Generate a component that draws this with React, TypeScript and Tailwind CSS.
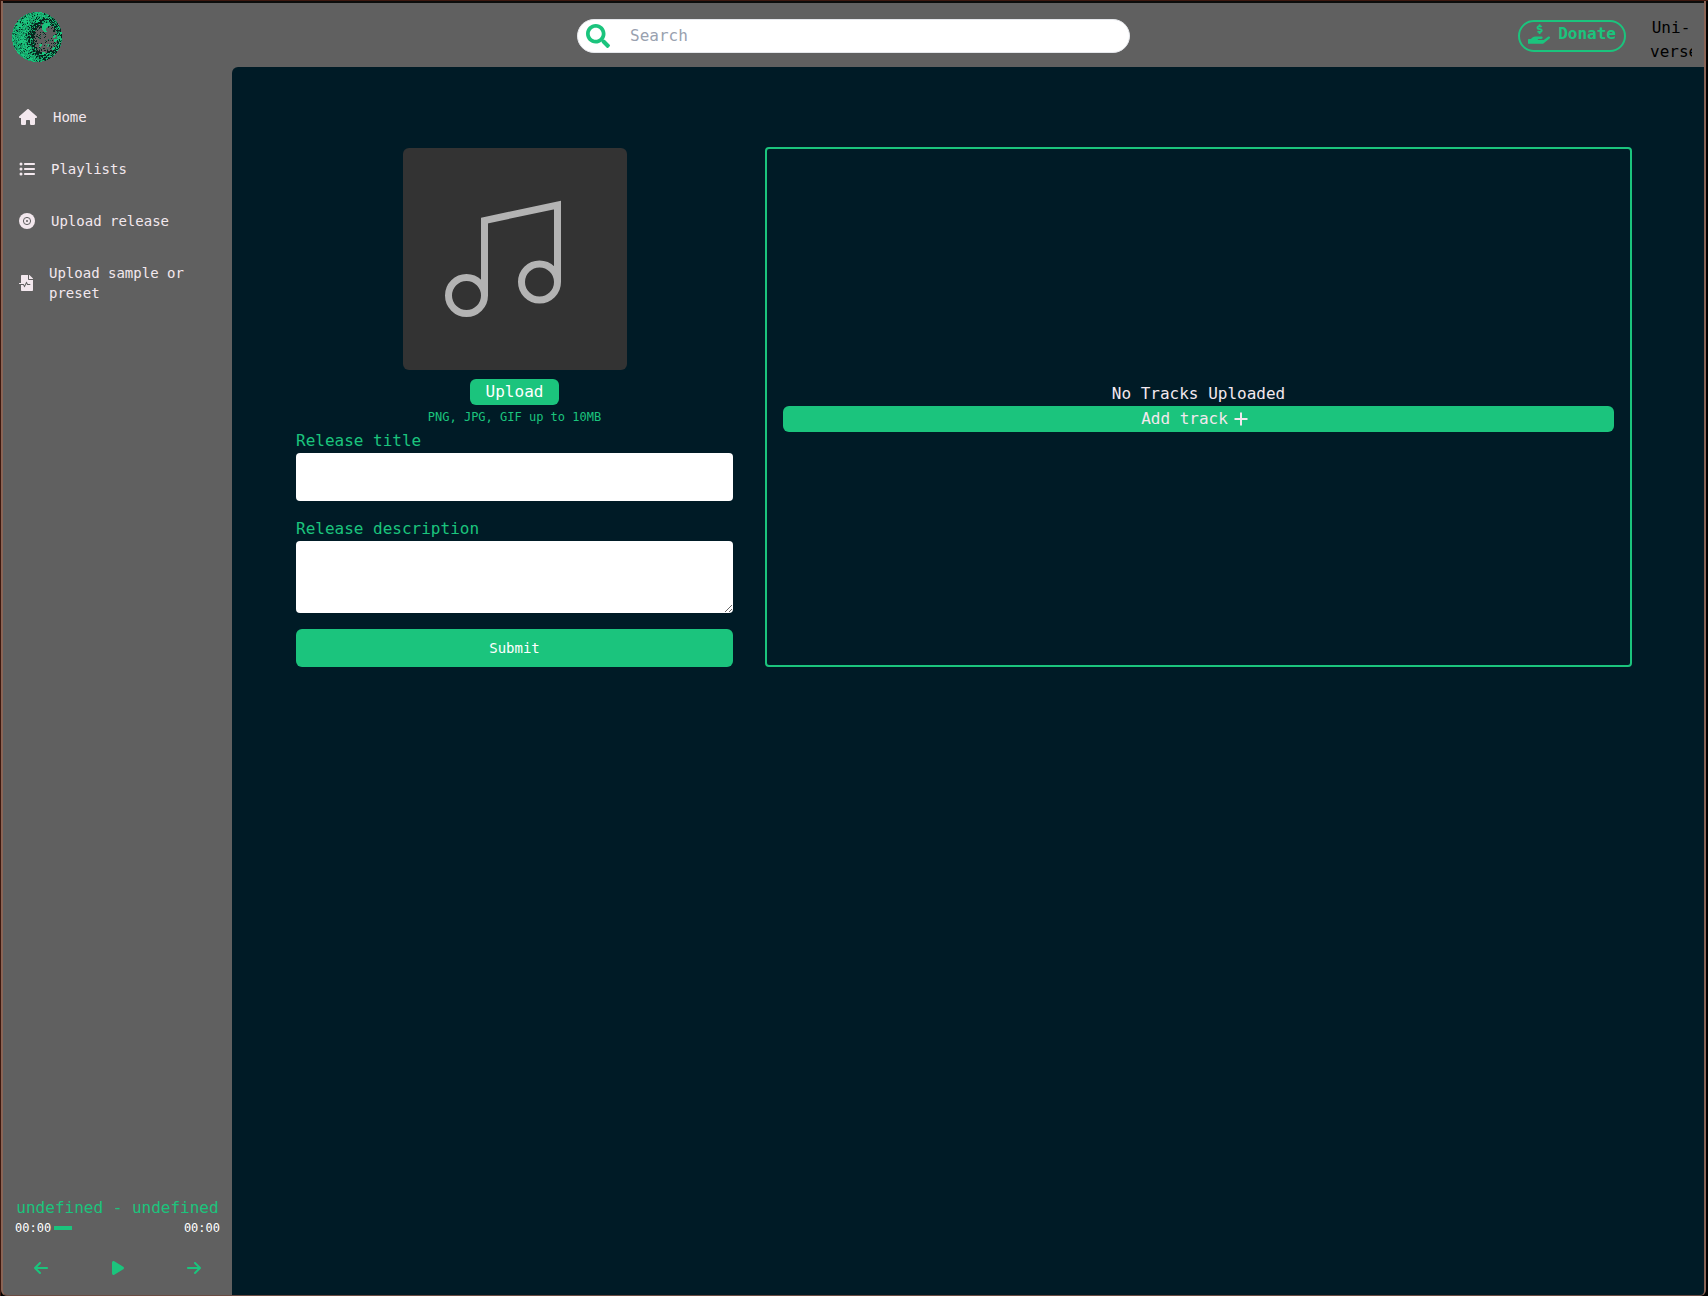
import { FaArrowLeft, FaArrowRight, FaHouse, FaListUl, FaPlay } from "react-icons/fa6";
import { FaFileMedicalAlt, FaHandHoldingUsd, FaSearch } from "react-icons/fa";

// Stippled moon: dots are scattered with a fixed pseudo-random sequence so it always looks the same.
function buildMoon() {
  let seed = 7;
  const rand = () => {
    seed = (seed * 16807) % 2147483647;
    return seed / 2147483647;
  };
  const layers = { light: "", mid: "", deep: "", dark: "" };
  const craters = [[7, 14, 3], [14, 8, 3], [10, 25, 2], [9, 29, 2], [25, 9, 2], [28, 33, 2], [35, 33, 2], [42, 24, 2], [43, 28, 2], [41, 36, 2], [31, 41, 2], [17, 36, 2]];
  for (let y = 0; y < 50; y++) {
    for (let x = 0; x < 50; x++) {
      const r = Math.hypot(x - 24.5, y - 24.5);
      const n = rand();
      const m = rand();
      if (r > 25) continue;
      const inner = Math.hypot((x - 33) / 12, (y - 26) / 15);
      const crescent = Math.hypot(x - 34, y - 15) < 5 && Math.hypot(x - 37, y - 17) > 3.4;
      const crater = craters.some(([a, b, c]) => Math.hypot(x - a, y - b) < c && Math.hypot(x - a - 1, y - b - 1) > c - 1.6);
      const dot = `M${x} ${y}h1v1h-1z`;
      if (crescent || (crater && n < 0.85)) layers.light += dot;
      else if (inner < 1) {
        if (n < (inner > 0.75 ? 0.4 : 0.08)) layers.dark += dot;
        else if (n > 0.96) layers.deep += dot;
      } else {
        const shade = x > 30 ? 0.4 : Math.max(0.05, 0.8 - (inner - 1) * 1.1);
        if (n < shade) layers.dark += dot;
        else if (n < shade + 0.15) layers.deep += dot;
        else if (m < 0.45) layers.light += dot;
        else layers.mid += dot;
      }
    }
  }
  return layers;
}

const moon = buildMoon();

function MoonLogo() {
  return (
    <svg viewBox="0 0 50 50" className="size-[50px]" shapeRendering="crispEdges" aria-hidden="true">
      <path d={moon.light} fill="#1bc47d" />
      <path d={moon.mid} fill="#17a168" />
      <path d={moon.deep} fill="#0f6546" />
      <path d={moon.dark} fill="#08261e" />
    </svg>
  );
}

function DiscIcon({ className }: { className?: string }) {
  return (
    <svg viewBox="0 0 16 16" className={className} aria-hidden="true">
      <circle cx="8" cy="8" r="8" fill="currentColor" />
      <circle cx="8" cy="8" r="3.6" fill="none" stroke="#606060" strokeWidth="1" />
      <circle cx="8" cy="8" r="1" fill="#606060" />
    </svg>
  );
}

const links = [
  { label: "Home", Icon: FaHouse, size: "h-4 w-[18px]" },
  { label: "Playlists", Icon: FaListUl, size: "size-4" },
  { label: "Upload release", Icon: DiscIcon, size: "size-4" },
  { label: "Upload sample or preset", Icon: FaFileMedicalAlt, size: "h-4 w-[14px]" },
];

function Header() {
  return (
    <header className="grid h-16 shrink-0 grid-cols-[1fr_minmax(0,553px)_1fr] items-center pt-0.5">
      <a href="#" aria-label="Universe home" className="ml-[9px] w-fit pt-0.5">
        <MoonLogo />
      </a>
      <label className="flex h-[34px] items-center rounded-full border border-gray-200 bg-white pl-2">
        <FaSearch className="size-6 shrink-0 text-[#1bc47d]" />
        <input type="search" aria-label="Search" placeholder="Search" className="ml-5 min-w-0 flex-1 bg-transparent pr-4 outline-none placeholder:text-gray-400" />
      </label>
      <div className="flex items-center justify-end gap-6 pr-3">
        <button className="flex h-8 items-center gap-2 rounded-full border-2 border-[#1bc47d] px-2 pb-1 font-bold text-[#1bc47d]">
          <FaHandHoldingUsd className="h-5 w-[22px]" />
          Donate
        </button>
        <button className="flex h-14 w-[42px] flex-col overflow-hidden pt-2 text-center text-black">
          <span className="block w-full">Uni-</span>
          <span>verse</span>
        </button>
      </div>
    </header>
  );
}

function Player() {
  return (
    <section aria-label="Player" className="px-3 pb-[19px]">
      <p className="text-center leading-6 text-[#1bc47d]">undefined - undefined</p>
      <div className="flex h-4 items-center text-xs text-white">
        <span>00:00</span>
        <span className="mx-[3px] flex flex-1">
          <span className="h-1 w-[18px] bg-[#1bc47d]" />
        </span>
        <span>00:00</span>
      </div>
      <div className="mt-6 flex justify-between px-[19px] text-[#1bc47d]">
        <button aria-label="Previous"><FaArrowLeft className="h-4 w-[14px]" /></button>
        <button aria-label="Play"><FaPlay className="h-4 w-3" /></button>
        <button aria-label="Next"><FaArrowRight className="h-4 w-[14px]" /></button>
      </div>
    </section>
  );
}

function Sidebar() {
  return (
    <aside className="flex w-[229px] shrink-0 flex-col justify-between">
      <nav className="flex flex-col gap-8 px-4 pt-10 text-sm leading-5">
        {links.map(({ label, Icon, size }) => (
          <a key={label} href="#" className="flex items-center gap-4">
            <Icon className={`${size} shrink-0`} />
            <span>{label}</span>
          </a>
        ))}
      </nav>
      <Player />
    </aside>
  );
}

function Cover() {
  return (
    <svg viewBox="0 0 224 222" className="h-[222px] w-[224px] rounded-md bg-[#333333]" role="img" aria-label="Cover art">
      <g fill="none" stroke="#b3b3b3" strokeWidth="7">
        <circle cx="63.500" cy="147.500" r="18" />
        <circle cx="136.500" cy="134" r="18" />
        <path d="M81.500 147.500V72.500L154.500 57V134" />
      </g>
    </svg>
  );
}

function ReleaseForm() {
  return (
    <form className="flex flex-col text-[#1bc47d]">
      <div className="flex flex-col items-center pt-px">
        <Cover />
        <button type="button" className="mt-[9px] h-[26px] rounded-md bg-[#1bc47d] px-4 text-white">Upload</button>
        <p className="mt-1 text-xs leading-4">PNG, JPG, GIF up to 10MB</p>
      </div>
      <label htmlFor="title" className="mt-1 leading-6">Release title</label>
      <input id="title" className="h-12 w-full rounded bg-white px-3 text-black" />
      <label htmlFor="description" className="mt-4 leading-6">Release description</label>
      <textarea id="description" className="h-[72px] w-full resize rounded bg-white p-3 text-black" />
      <button type="submit" className="mt-4 h-[38px] rounded-md bg-[#1bc47d] text-sm font-medium text-white">Submit</button>
    </form>
  );
}

function Tracks() {
  return (
    <section className="flex flex-col justify-center rounded border-2 border-[#1bc47d] px-4">
      <p className="text-center leading-6">No Tracks Uploaded</p>
      <button className="flex h-[26px] items-center justify-center gap-1.5 rounded-md bg-[#1bc47d] pr-2">
        Add track
        <svg viewBox="0 0 14 14" className="size-[14px]" fill="none" stroke="currentColor" strokeWidth="2" aria-hidden="true">
          <path d="M7 0.500V13.500M0.500 7H13.500" />
        </svg>
      </button>
    </section>
  );
}

export default function App() {
  return (
    <div className="flex min-h-screen border-l border-t border-[#3d180f] bg-black pr-0.5 font-['DejaVu_Sans_Mono',monospace] text-base text-[#f3e8ee]">
      <div className="flex min-w-0 flex-1 flex-col rounded-b-md border-x-2 border-b border-[#8a6455] border-b-[#6b4c42] bg-[#606060]">
        <div className="h-0.5 shrink-0 bg-[#0b0c0b]" />
        <Header />
        <div className="flex flex-1">
          <Sidebar />
          <main className="min-w-0 flex-1 rounded-tl-md rounded-br-sm bg-[#001b26] pt-20 pr-[72px] pl-16">
            <div className="grid grid-cols-[437fr_867fr] gap-8">
              <ReleaseForm />
              <Tracks />
            </div>
          </main>
        </div>
      </div>
    </div>
  );
}
